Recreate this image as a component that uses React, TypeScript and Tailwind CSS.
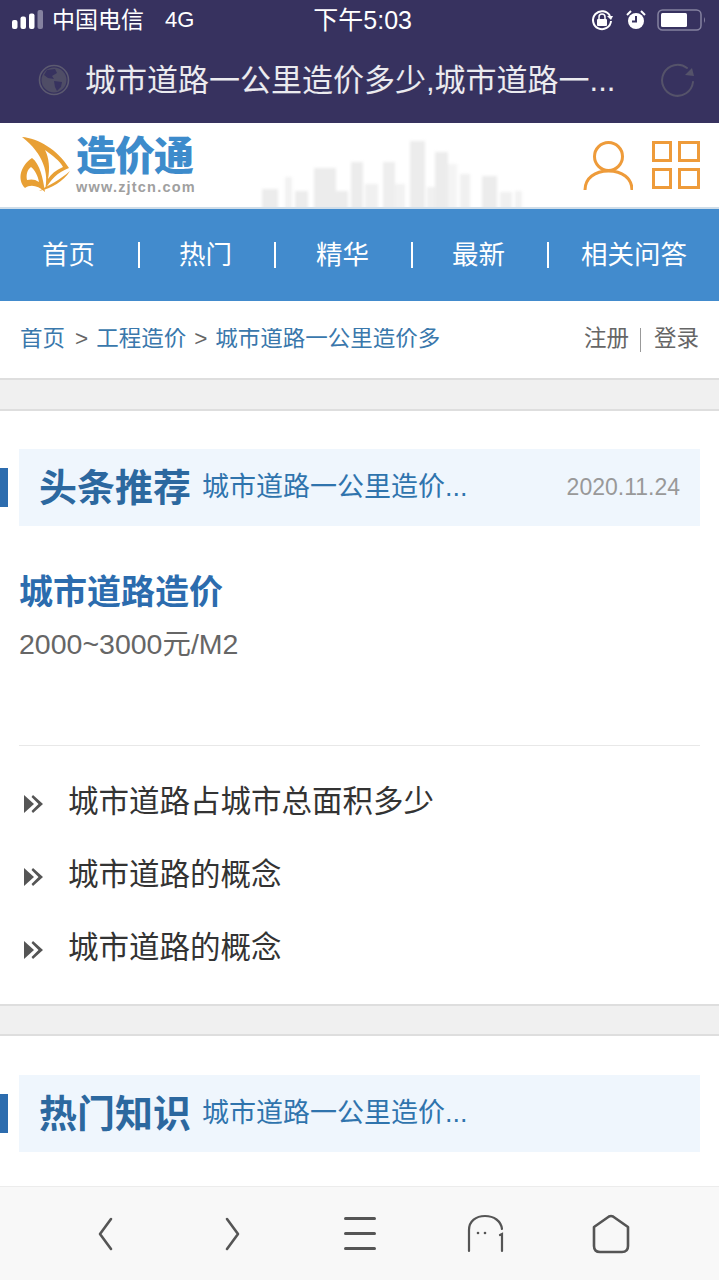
import React from "react";

const stack = { fontFamily: '"Liberation Sans", "Noto Sans CJK SC", sans-serif' };

function Signal() {
  return (
    <svg width="32" height="20" viewBox="0 0 32 20" className="shrink-0">
      <rect x="0" y="10" width="5.5" height="9" rx="2" fill="#fff" />
      <rect x="8.5" y="6.5" width="5.5" height="12.5" rx="2" fill="#fff" />
      <rect x="17" y="3.5" width="5.5" height="15.5" rx="2" fill="#fff" />
      <rect x="25.5" y="0" width="5.5" height="19" rx="2" fill="#8582a0" />
    </svg>
  );
}

function StatusRight() {
  return (
    <div className="flex items-center ml-auto">
      <svg width="24" height="24" viewBox="0 0 24 24" fill="none" className="mr-[11px]">
        <path d="M20 8 A9 9 0 1 0 21 13" stroke="#fff" strokeWidth="2" />
        <path d="M17 8 L23 8 L21 12Z" fill="#fff" />
        <rect x="7" y="11" width="10" height="7" rx="1" fill="#fff" />
        <path d="M9 11 V9 a3 3 0 0 1 6 0 V11" stroke="#fff" strokeWidth="1.5" />
      </svg>
      <svg width="22" height="22" viewBox="0 0 22 22" fill="none" className="mr-[10px]">
        <circle cx="11" cy="12" r="8" fill="#fff" />
        <path d="M11 7 V12.5 H7" stroke="#37325f" strokeWidth="2" />
        <path d="M2 6 L6 2 M16 2 L20 6" stroke="#fff" strokeWidth="2" />
      </svg>
      <svg width="50" height="22" viewBox="0 0 50 22" fill="none">
        <rect x="1" y="1" width="43" height="20" rx="4.5" stroke="#8582a0" strokeWidth="1.5" />
        <rect x="4" y="4" width="26" height="14" rx="1.5" fill="#fff" />
        <path d="M47 8 Q49 11 47 14Z" fill="#8582a0" />
      </svg>
    </div>
  );
}

function Globe() {
  return (
    <svg width="32" height="32" viewBox="0 0 32 32" fill="none" className="shrink-0">
      <circle cx="16" cy="16" r="14.5" stroke="#5c5a70" strokeWidth="1.6" />
      <circle cx="16" cy="16" r="12.5" fill="#4f4d66" />
      <path d="M9 6 L17 5 L19 9 L14 12 L16 15 L10 14 L6 11Z" fill="#37325f" />
      <path d="M16 17 L24 18 L23 23 L19 27 L17 23Z" fill="#37325f" />
    </svg>
  );
}

function Reload() {
  return (
    <svg width="36" height="36" viewBox="0 0 36 36" fill="none" className="shrink-0">
      <path d="M33 20 A15.5 15.5 0 1 1 27 6" stroke="#55536a" strokeWidth="2" strokeLinecap="round" />
      <path d="M25 13 L34 14 L32 6 Z" fill="#55536a" />
    </svg>
  );
}

function LogoMark() {
  return (
    <svg width="56" height="62" viewBox="0 0 56 62" className="shrink-0">
      <path d="M8 7 C24 8 44 20 55 38 C44 42 36 50 31 60 C35 44 30 24 8 7Z" fill="#e8a035" />
      <path d="M31 20 C38 25 46 31 49 37 C42 40 37 44 34 49 C36 38 35 28 31 20Z" fill="#fff" />
      <path d="M18 28 C26 34 29 48 31 62 C24 55 16 54 11 58 C3 50 6 36 18 28Z" fill="#e8a035" />
      <path d="M17 37 C21 40 24 46 25 52 C21 49 17 49 13 50 C12 45 13 40 17 37Z" fill="#fff" />
      <path d="M25 61 C35 55 46 50 56 41 C49 52 38 58 25 61Z" fill="#e8a035" />
    </svg>
  );
}

function Skyline() {
  const bars: [number, number, number, number][] = [
    [7, 60, 16, 1], [30, 48, 7, 0.7], [40, 62, 13, 1], [59, 39, 22, 1], [81, 62, 12, 1], [96, 33, 12, 1],
    [110, 55, 13, 0.8], [128, 33, 12, 0.9], [140, 55, 10, 0.7], [155, 12, 15, 1], [172, 58, 8, 0.8], [180, 23, 13, 1],
    [193, 35, 9, 0.6], [205, 45, 10, 0.8], [227, 47, 15, 1], [245, 63, 12, 0.8], [260, 62, 7, 0.7],
  ];
  return (
    <svg width="280" height="78" viewBox="0 0 280 78" className="shrink-0">
      <g fill="#ececec" style={{ filter: "blur(1.5px)" }}>
        {bars.map(([x, y, w, o], i) => (
          <rect key={i} x={x} y={y} width={w} height={82 - y} opacity={o} />
        ))}
      </g>
    </svg>
  );
}

function UserIcon() {
  return (
    <svg width="50" height="50" viewBox="0 0 50 50" fill="none" className="shrink-0">
      <circle cx="25.5" cy="15.5" r="14" stroke="#ee9b3a" strokeWidth="3" />
      <path d="M2 49 C2 37 12 30 25.5 30 C39 30 49 37 49 49" stroke="#ee9b3a" strokeWidth="3" />
    </svg>
  );
}

function GridIcon() {
  return (
    <div className="grid grid-cols-[20px_22px] gap-[6px] w-[48px]">
      {[0, 1, 2, 3].map((i) => (
        <div key={i} className="h-[21px] border-[3px] border-[#ee9b3a]" />
      ))}
    </div>
  );
}

function SectionTitle({ title, sub, date }: { title: string; sub: string; date?: string }) {
  return (
    <div className="relative h-[77px]">
      <div className="absolute left-0 top-[19px] w-[8px] h-[39px] bg-[#2c6cae]" />
      <div className="mx-[19px] h-full bg-[#eff6fd] flex items-center pl-[20px] pr-[20px]">
        <span className="text-[38px] font-bold text-[#2c689f] leading-none whitespace-nowrap">{title}</span>
        <span className="ml-[11px] text-[27px] text-[#2f74ad] leading-none whitespace-nowrap">{sub}</span>
        {date && <span className="ml-auto text-[23px] text-[#999] leading-none">{date}</span>}
      </div>
    </div>
  );
}

function Arrow() {
  return (
    <svg width="20" height="20" viewBox="0 0 20 20" className="shrink-0">
      <path d="M0 1 L10 10 L0 19Z" fill="#555" />
      <path d="M9 1 L19 10 L9 19 L7.5 17 L14.5 10 L7.5 3Z" fill="#555" />
    </svg>
  );
}

function Bullet({ text }: { text: string }) {
  return (
    <div className="flex items-center h-[73px] pl-[24px]">
      <div className="mt-[4px] flex"><Arrow /></div>
      <span className="ml-[24px] text-[30.5px] text-[#333] leading-none whitespace-nowrap">{text}</span>
    </div>
  );
}

function Band() {
  return <div className="h-[32px] shrink-0 bg-[#f0f0f0] border-y-2 border-[#dedede]" />;
}

export default function App() {
  return (
    <div className="w-[719px] h-[1280px] overflow-hidden bg-white flex flex-col relative" style={stack}>
      <div className="bg-[#37325f] h-[123px] shrink-0 flex flex-col">
        <div className="h-[40px] flex items-center pl-[12px] pr-[12px] text-white">
          <Signal />
          <span className="ml-[8px] text-[23px] leading-none whitespace-nowrap">中国电信</span>
          <span className="ml-[21px] text-[22px] leading-none">4G</span>
          <span className="ml-[119px] text-[25px] leading-none whitespace-nowrap">下午5:03</span>
          <StatusRight />
        </div>
        <div className="flex-1 flex items-center pl-[38px] pr-[23px] pb-[3px]">
          <Globe />
          <span className="ml-[15px] text-[31px] text-white/90 leading-none flex-1 whitespace-nowrap">
            城市道路一公里造价多少,城市道路一...
          </span>
          <Reload />
        </div>
      </div>

      <div className="h-[86px] shrink-0 flex items-end border-b-2 border-[#cfdde9] pl-[14px] pr-[19px]">
        <div className="self-start mt-[7px]"><LogoMark /></div>
        <div className="self-start ml-[6px] mt-[11px] flex flex-col w-[122px]">
          <span className="text-[40px] font-black text-[#3d8bcb] leading-[44px] tracking-[-1px] whitespace-nowrap">造价通</span>
          <span className="text-[14.5px] font-bold text-[#a0a0a0] leading-[14px] mt-[2px] tracking-[1.2px]">www.zjtcn.com</span>
        </div>
        <div className="ml-[57px] flex"><Skyline /></div>
        <div className="ml-auto self-start mt-[18px] flex items-start gap-[19px]">
          <UserIcon />
          <GridIcon />
        </div>
      </div>

      <div className="h-[92px] shrink-0 bg-[#428bcd] flex items-center pl-[42px] text-white text-[26.5px] leading-none">
        <span>首页</span>
        <div className="ml-[43px] mr-[39px] w-[2px] h-[26px] bg-white" />
        <span>热门</span>
        <div className="ml-[42px] mr-[40px] w-[2px] h-[26px] bg-white" />
        <span>精华</span>
        <div className="ml-[42px] mr-[39px] w-[2px] h-[26px] bg-white" />
        <span>最新</span>
        <div className="ml-[42px] mr-[32px] w-[2px] h-[26px] bg-white" />
        <span>相关问答</span>
      </div>

      <div className="h-[77px] shrink-0 flex items-center justify-between pl-[20px] pr-[20px] text-[22.5px] leading-none">
        <div className="flex items-center text-[#3a78ac] w-[420px] overflow-hidden whitespace-nowrap">
          <span>首页</span>
          <span className="ml-[10px] mr-[8px] text-[#666]">&gt;</span>
          <span>工程造价</span>
          <span className="ml-[8px] mr-[8px] text-[#666]">&gt;</span>
          <span>城市道路一公里造价多少</span>
        </div>
        <div className="flex items-center text-[#666]">
          <span>注册</span>
          <span className="ml-[11px] mr-[13px] w-[1px] h-[24px] bg-[#999]" />
          <span>登录</span>
        </div>
      </div>

      <div className="h-[33px] shrink-0 bg-[#f0f0f0] border-y-2 border-[#dedede]" />

      <div className="pt-[38px] shrink-0">
        <SectionTitle title="头条推荐" sub="城市道路一公里造价..." date="2020.11.24" />
        <div className="px-[19px]">
          <div className="pt-[46px] text-[34px] font-bold text-[#2c6cae] leading-[40px]">城市道路造价</div>
          <div className="pt-[16px] pb-[85px] text-[28.5px] text-[#666] leading-[32px]">2000~3000元/M2</div>
          <div className="h-[1px] bg-[#e8e8e8]" />
        </div>
        <div className="pt-[19px] pb-[20px]">
          <Bullet text="城市道路占城市总面积多少" />
          <Bullet text="城市道路的概念" />
          <Bullet text="城市道路的概念" />
        </div>
      </div>

      <Band />

      <div className="pt-[39px] shrink-0">
        <SectionTitle title="热门知识" sub="城市道路一公里造价..." />
      </div>

      <div className="absolute left-0 right-0 bottom-0 h-[94px] bg-[#f8f8f8] border-t border-[#ececec] flex items-center pl-[97px]">
        <svg width="18" height="34" viewBox="0 0 18 34" fill="none" className="shrink-0">
          <path d="M14 2 L3 17 L14 32" stroke="#555" strokeWidth="2.6" strokeLinecap="round" strokeLinejoin="round" />
        </svg>
        <svg width="18" height="34" viewBox="0 0 18 34" fill="none" className="shrink-0 ml-[108px]">
          <path d="M4 2 L15 17 L4 32" stroke="#555" strokeWidth="2.6" strokeLinecap="round" strokeLinejoin="round" />
        </svg>
        <div className="w-[32px] shrink-0 ml-[103px] flex flex-col gap-[12px]">
          <div className="h-[3px] bg-[#555] rounded-full" />
          <div className="h-[3px] bg-[#555] rounded-full" />
          <div className="h-[3px] bg-[#555] rounded-full" />
        </div>
        <svg width="38" height="40" viewBox="0 0 38 40" fill="none" className="shrink-0 ml-[91px]">
          <path d="M2 37 V16 C2 7 9 2 18 2 C27 2 34 7 35 15" stroke="#555" strokeWidth="2.2" strokeLinecap="round" />
          <path d="M33 21 L35 20 V37" stroke="#555" strokeWidth="2.2" strokeLinecap="round" />
          <circle cx="11" cy="19" r="1.3" fill="#555" />
          <circle cx="18" cy="19" r="1.3" fill="#555" />
        </svg>
        <svg width="40" height="40" viewBox="0 0 40 40" fill="none" className="shrink-0 ml-[86px]">
          <path d="M3 13 L18 2.5 Q20 1.5 22 2.5 L37 13 V32 Q37 38 31 38 H9 Q3 38 3 32Z" stroke="#555" strokeWidth="2.6" strokeLinejoin="round" />
        </svg>
      </div>
    </div>
  );
}
